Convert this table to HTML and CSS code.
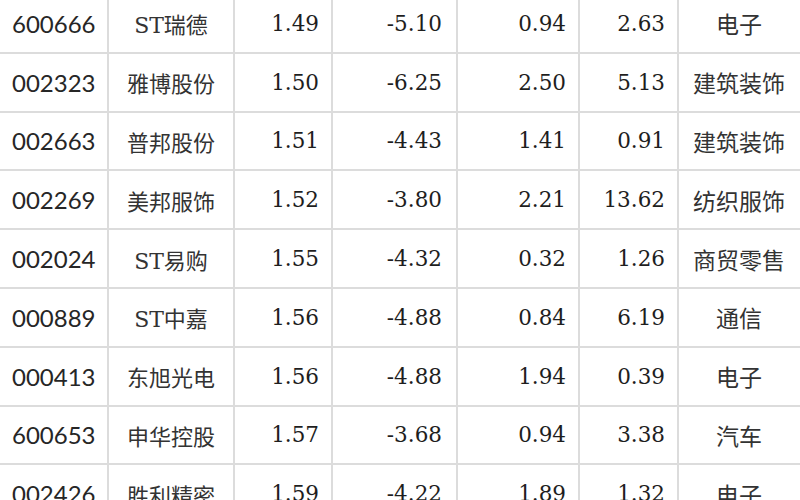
FILE: index.html
```html
<!DOCTYPE html>
<html lang="zh">
<head>
<meta charset="utf-8">
<link rel="stylesheet" href="styles.css">
</head>
<body>
<div class="sheet">
  <div class="row"><div class="c code">600666</div><div class="c name">ST瑞德</div><div class="c num">1.49</div><div class="c num n4">-5.10</div><div class="c num">0.94</div><div class="c num">2.63</div><div class="c ind">电子</div></div>
  <div class="row"><div class="c code">002323</div><div class="c name">雅博股份</div><div class="c num">1.50</div><div class="c num n4">-6.25</div><div class="c num">2.50</div><div class="c num">5.13</div><div class="c ind">建筑装饰</div></div>
  <div class="row"><div class="c code">002663</div><div class="c name">普邦股份</div><div class="c num">1.51</div><div class="c num n4">-4.43</div><div class="c num">1.41</div><div class="c num">0.91</div><div class="c ind">建筑装饰</div></div>
  <div class="row"><div class="c code">002269</div><div class="c name">美邦服饰</div><div class="c num">1.52</div><div class="c num n4">-3.80</div><div class="c num">2.21</div><div class="c num">13.62</div><div class="c ind">纺织服饰</div></div>
  <div class="row"><div class="c code">002024</div><div class="c name">ST易购</div><div class="c num">1.55</div><div class="c num n4">-4.32</div><div class="c num">0.32</div><div class="c num">1.26</div><div class="c ind">商贸零售</div></div>
  <div class="row"><div class="c code">000889</div><div class="c name">ST中嘉</div><div class="c num">1.56</div><div class="c num n4">-4.88</div><div class="c num">0.84</div><div class="c num">6.19</div><div class="c ind">通信</div></div>
  <div class="row"><div class="c code">000413</div><div class="c name">东旭光电</div><div class="c num">1.56</div><div class="c num n4">-4.88</div><div class="c num">1.94</div><div class="c num">0.39</div><div class="c ind">电子</div></div>
  <div class="row"><div class="c code">600653</div><div class="c name">申华控股</div><div class="c num">1.57</div><div class="c num n4">-3.68</div><div class="c num">0.94</div><div class="c num">3.38</div><div class="c ind">汽车</div></div>
  <div class="row"><div class="c code">002426</div><div class="c name">胜利精密</div><div class="c num">1.59</div><div class="c num n4">-4.22</div><div class="c num">1.89</div><div class="c num">1.32</div><div class="c ind">电子</div></div>
</div>
</body>
</html>
```

FILE: styles.css
```css
html, body {
  margin: 0;
  padding: 0;
  background: #ffffff;
  overflow: hidden;
}
.sheet {
  width: 800px;
  height: 500px;
  overflow: hidden;
}
.rows-wrap {}
.sheet .row:first-child {
  margin-top: -5px;
}
.row {
  display: grid;
  grid-template-columns: 109px 126px 98px 125px 122px 99px 130px;
  height: 58.8px;
  box-sizing: border-box;
  border-bottom: 2px solid #dcdcdc;
}
.c {
  box-sizing: border-box;
  border-right: 2px solid #dcdcdc;
  display: flex;
  align-items: center;
  white-space: nowrap;
  color: #1e1e1e;
}
.code {
  font-family: Lato, "Open Sans", sans-serif;
  font-size: 24px;
  padding-left: 12px;
  color: #262626;
}
.name, .ind {
  justify-content: center;
  font-family: "DejaVu Serif", "Noto Sans CJK SC", serif;
  font-size: 22px;
  color: #333333;
}
.name {
  font-family: "DejaVu Serif", "Noto Sans CJK SC", serif;
}
.ind {
  font-family: "Noto Sans CJK SC", sans-serif;
  font-size: 23px;
  padding-right: 8px;
}
.num {
  justify-content: flex-end;
  font-family: "DejaVu Serif", serif;
  font-size: 21.5px;
  padding-right: 12px;
}
.n4 {
  padding-right: 14px;
}
```
